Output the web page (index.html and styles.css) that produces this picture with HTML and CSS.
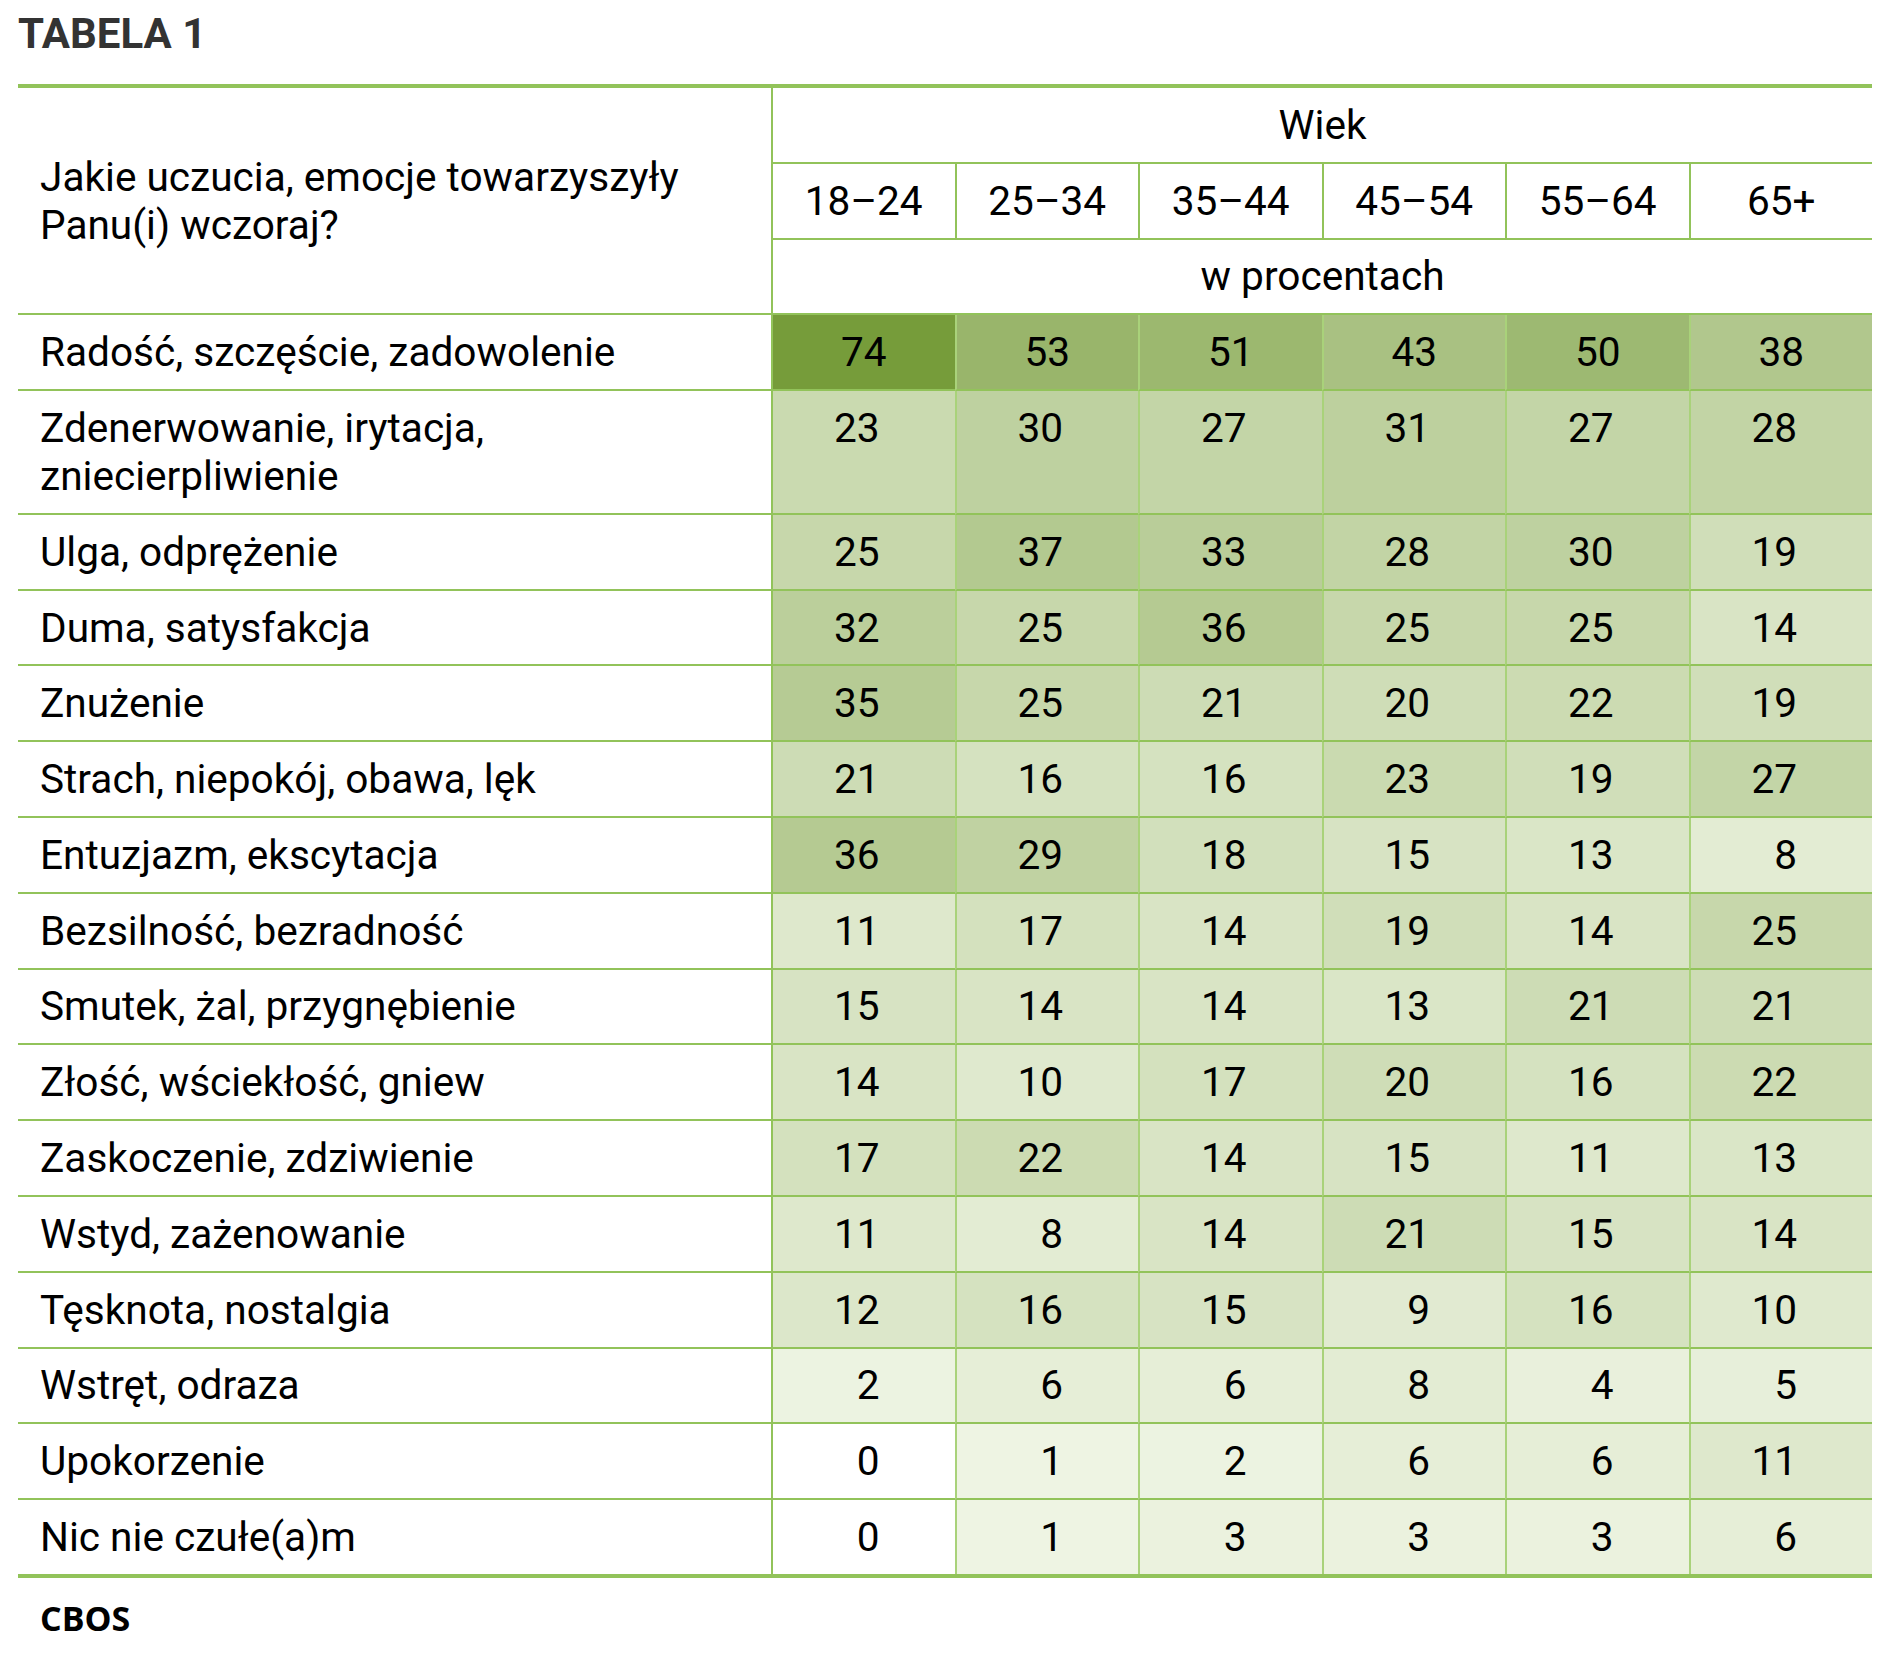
FILE: index.html
```html
<!DOCTYPE html>
<html lang="pl">
<head>
<meta charset="utf-8">
<title>Tabela 1</title>
<link rel="stylesheet" href="styles.css">
</head>
<body>
<div class="page">
  <h1 class="title">TABELA 1</h1>
  <table class="tbl">
    <colgroup>
      <col class="c-label">
      <col class="c-num"><col class="c-num"><col class="c-num"><col class="c-num"><col class="c-num"><col class="c-num">
    </colgroup>
    <thead>
      <tr>
        <th class="q" rowspan="3">Jakie uczucia, emocje towarzyszyły<br>Panu(i) wczoraj?</th>
        <th class="hd" colspan="6">Wiek</th>
      </tr>
      <tr>
        <th class="hd">18–24</th><th class="hd">25–34</th><th class="hd">35–44</th><th class="hd">45–54</th><th class="hd">55–64</th><th class="hd">65+</th>
      </tr>
      <tr>
        <th class="hd" colspan="6">w procentach</th>
      </tr>
    </thead>
    <tbody>
      <tr class="first">
        <th class="lbl">Radość, szczęście, zadowolenie</th>
        <td style="background:#769c3a">74</td><td style="background:#99b56b">53</td><td style="background:#9cb86f">51</td><td style="background:#a9c182">43</td><td style="background:#9db972">50</td><td style="background:#b1c78d">38</td>
      </tr>
      <tr>
        <th class="lbl">Zdenerwowanie, irytacja,<br>zniecierpliwienie</th>
        <td style="background:#cadab0">23</td><td style="background:#bed1a0">30</td><td style="background:#c3d5a7">27</td><td style="background:#bdd09e">31</td><td style="background:#c3d5a7">27</td><td style="background:#c2d4a5">28</td>
      </tr>
      <tr>
        <th class="lbl">Ulga, odprężenie</th>
        <td style="background:#c7d7ab">25</td><td style="background:#b3c990">37</td><td style="background:#b9cd99">33</td><td style="background:#c2d4a5">28</td><td style="background:#bed1a0">30</td><td style="background:#d0deb9">19</td>
      </tr>
      <tr>
        <th class="lbl">Duma, satysfakcja</th>
        <td style="background:#bbcf9b">32</td><td style="background:#c7d7ab">25</td><td style="background:#b5ca92">36</td><td style="background:#c7d7ab">25</td><td style="background:#c7d7ab">25</td><td style="background:#d9e4c5">14</td>
      </tr>
      <tr>
        <th class="lbl">Znużenie</th>
        <td style="background:#b6cb94">35</td><td style="background:#c7d7ab">25</td><td style="background:#cddcb5">21</td><td style="background:#cfddb7">20</td><td style="background:#ccdbb2">22</td><td style="background:#d0deb9">19</td>
      </tr>
      <tr>
        <th class="lbl">Strach, niepokój, obawa, lęk</th>
        <td style="background:#cddcb5">21</td><td style="background:#d5e2c0">16</td><td style="background:#d5e2c0">16</td><td style="background:#cadab0">23</td><td style="background:#d0deb9">19</td><td style="background:#c3d5a7">27</td>
      </tr>
      <tr>
        <th class="lbl">Entuzjazm, ekscytacja</th>
        <td style="background:#b5ca92">36</td><td style="background:#c0d2a2">29</td><td style="background:#d2e0bc">18</td><td style="background:#d7e3c3">15</td><td style="background:#dae6c7">13</td><td style="background:#e3ecd3">8</td>
      </tr>
      <tr>
        <th class="lbl">Bezsilność, bezradność</th>
        <td style="background:#dee8cc">11</td><td style="background:#d4e1be">17</td><td style="background:#d9e4c5">14</td><td style="background:#d0deb9">19</td><td style="background:#d9e4c5">14</td><td style="background:#c7d7ab">25</td>
      </tr>
      <tr>
        <th class="lbl">Smutek, żal, przygnębienie</th>
        <td style="background:#d7e3c3">15</td><td style="background:#d9e4c5">14</td><td style="background:#d9e4c5">14</td><td style="background:#dae6c7">13</td><td style="background:#cddcb5">21</td><td style="background:#cddcb5">21</td>
      </tr>
      <tr>
        <th class="lbl">Złość, wściekłość, gniew</th>
        <td style="background:#d9e4c5">14</td><td style="background:#dfe9ce">10</td><td style="background:#d4e1be">17</td><td style="background:#cfddb7">20</td><td style="background:#d5e2c0">16</td><td style="background:#ccdbb2">22</td>
      </tr>
      <tr>
        <th class="lbl">Zaskoczenie, zdziwienie</th>
        <td style="background:#d4e1be">17</td><td style="background:#ccdbb2">22</td><td style="background:#d9e4c5">14</td><td style="background:#d7e3c3">15</td><td style="background:#dee8cc">11</td><td style="background:#dae6c7">13</td>
      </tr>
      <tr>
        <th class="lbl">Wstyd, zażenowanie</th>
        <td style="background:#dee8cc">11</td><td style="background:#e3ecd3">8</td><td style="background:#d9e4c5">14</td><td style="background:#cddcb5">21</td><td style="background:#d7e3c3">15</td><td style="background:#d9e4c5">14</td>
      </tr>
      <tr>
        <th class="lbl">Tęsknota, nostalgia</th>
        <td style="background:#dce7ca">12</td><td style="background:#d5e2c0">16</td><td style="background:#d7e3c3">15</td><td style="background:#e1ead1">9</td><td style="background:#d5e2c0">16</td><td style="background:#dfe9ce">10</td>
      </tr>
      <tr>
        <th class="lbl">Wstręt, odraza</th>
        <td style="background:#ecf3e1">2</td><td style="background:#e6eed7">6</td><td style="background:#e6eed7">6</td><td style="background:#e3ecd3">8</td><td style="background:#e9f0dc">4</td><td style="background:#e7efda">5</td>
      </tr>
      <tr>
        <th class="lbl">Upokorzenie</th>
        <td style="background:#ffffff">0</td><td style="background:#eef4e3">1</td><td style="background:#ecf3e1">2</td><td style="background:#e6eed7">6</td><td style="background:#e6eed7">6</td><td style="background:#dee8cc">11</td>
      </tr>
      <tr class="last">
        <th class="lbl">Nic nie czułe(a)m</th>
        <td style="background:#ffffff">0</td><td style="background:#eef4e3">1</td><td style="background:#ebf2de">3</td><td style="background:#ebf2de">3</td><td style="background:#ebf2de">3</td><td style="background:#e6eed7">6</td>
      </tr>
    </tbody>
  </table>
  <p class="source">CBOS</p>
</div>
</body>
</html>
```

FILE: styles.css
```css
html, body {
  margin: 0;
  padding: 0;
  background: #ffffff;
}

body {
  font-family: Roboto, "Noto Sans", "Liberation Sans", sans-serif;
  color: #000000;
}

.page {
  width: 1854px;
  padding: 13px 19px 0 18px;
}

.title {
  margin: 0 0 29px;
  font-family: Roboto, "Liberation Sans", sans-serif;
  font-weight: 700;
  font-size: 42px;
  line-height: 42px;
  color: #333333;
}

.tbl {
  width: 1854px;
  table-layout: fixed;
  border-collapse: separate;
  border-spacing: 0;
  border-top: 4px solid #92c35a;
  border-bottom: 4px solid #92c35a;
}

.c-label { width: 753px; }
.c-num { width: 183.5px; }

.tbl th,
.tbl td {
  font-weight: 400;
  font-size: 40.6px;
  line-height: 48px;
  padding: 12.9px 0;
  border-bottom: 2px solid #92c35a;
}

.tbl .q {
  text-align: left;
  vertical-align: middle;
  padding-left: 22px;
}

.tbl .hd {
  text-align: center;
  vertical-align: middle;
  border-left: 2px solid #92c35a;
}

.tbl .lbl {
  text-align: left;
  vertical-align: top;
  padding-left: 22px;
}

.tbl td {
  text-align: right;
  vertical-align: top;
  padding-right: 75px;
  border-left: 2px solid #a9d27a;
}

.tbl tbody td:nth-child(2) {
  border-left-color: #92c35a;
}

.tbl .first td {
  text-align: center;
  padding-right: 0;
}

.tbl .last th,
.tbl .last td {
  border-bottom: none;
}

.source {
  margin: 23px 0 0 22px;
  font-family: "Open Sans", "Liberation Sans", sans-serif;
  font-weight: 700;
  font-size: 34px;
  line-height: 34px;
  color: #000000;
}
```
